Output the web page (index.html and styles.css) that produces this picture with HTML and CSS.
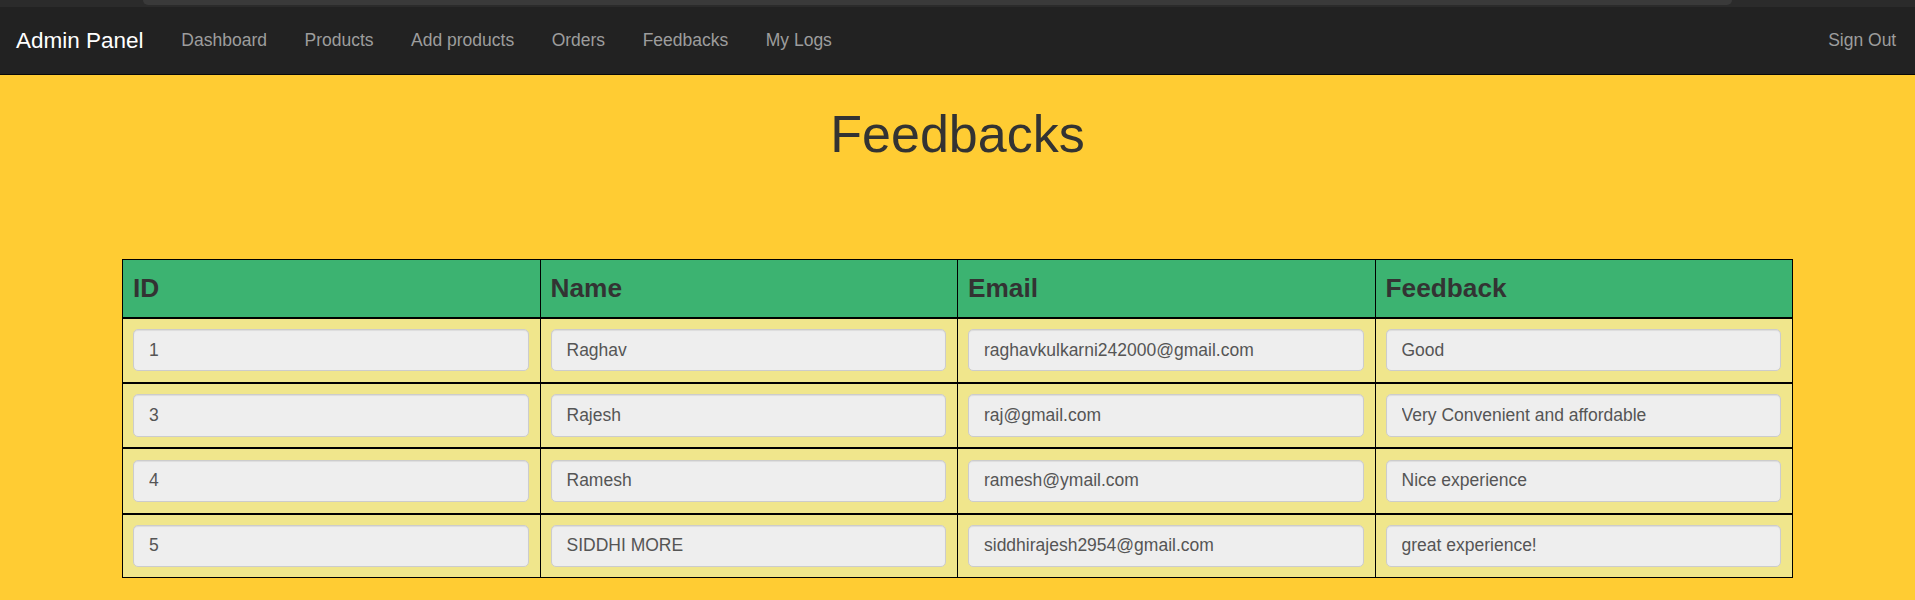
FILE: index.html
```html
<!DOCTYPE html>
<html lang="en">
<head>
<meta charset="utf-8">
<title>Feedbacks</title>
<link rel="stylesheet" href="styles.css">
</head>
<body>
<div class="topstrip"><div class="tabbar"></div></div>
<nav class="navbar">
  <a class="brand" href="#">Admin Panel</a>
  <ul class="nav">
    <li><a href="#">Dashboard</a></li>
    <li><a href="#">Products</a></li>
    <li><a href="#">Add products</a></li>
    <li><a href="#">Orders</a></li>
    <li><a href="#">Feedbacks</a></li>
    <li><a href="#">My Logs</a></li>
  </ul>
  <ul class="nav nav-right">
    <li><a href="#">Sign Out</a></li>
  </ul>
</nav>
<main class="content">
  <h1 class="title">Feedbacks</h1>
  <table class="feedback-table">
    <thead>
      <tr><th>ID</th><th>Name</th><th>Email</th><th>Feedback</th></tr>
    </thead>
    <tbody>
      <tr>
        <td><input class="field" type="text" value="1" readonly></td>
        <td><input class="field" type="text" value="Raghav" readonly></td>
        <td><input class="field" type="text" value="raghavkulkarni242000@gmail.com" readonly></td>
        <td><input class="field" type="text" value="Good" readonly></td>
      </tr>
      <tr>
        <td><input class="field" type="text" value="3" readonly></td>
        <td><input class="field" type="text" value="Rajesh" readonly></td>
        <td><input class="field" type="text" value="raj@gmail.com" readonly></td>
        <td><input class="field" type="text" value="Very Convenient and affordable" readonly></td>
      </tr>
      <tr>
        <td><input class="field" type="text" value="4" readonly></td>
        <td><input class="field" type="text" value="Ramesh" readonly></td>
        <td><input class="field" type="text" value="ramesh@ymail.com" readonly></td>
        <td><input class="field" type="text" value="Nice experience" readonly></td>
      </tr>
      <tr>
        <td><input class="field" type="text" value="5" readonly></td>
        <td><input class="field" type="text" value="SIDDHI MORE" readonly></td>
        <td><input class="field" type="text" value="siddhirajesh2954@gmail.com" readonly></td>
        <td><input class="field" type="text" value="great experience!" readonly></td>
      </tr>
    </tbody>
  </table>
</main>
</body>
</html>
```

FILE: styles.css
```css
* { box-sizing: border-box; }

html, body {
  margin: 0;
  padding: 0;
}

body {
  background: #ffcc33;
  font-family: "Liberation Sans", Arial, sans-serif;
  color: #333;
  height: 600px;
  overflow: hidden;
}

.topstrip {
  height: 7px;
  background: #2b2b2b;
  padding-left: 143px;
}

.tabbar {
  width: 1589px;
  height: 5px;
  background: #3a3a3a;
  border-radius: 0 0 6px 6px;
}

.navbar {
  height: 68px;
  background: #222;
  border-bottom: 1px solid #080808;
  display: flex;
  align-items: center;
  padding: 0 0 0 16px;
}

.brand {
  font-size: 22.5px;
  color: #fff;
  text-decoration: none;
  padding-right: 19px;
}

.nav {
  list-style: none;
  margin: 0;
  padding: 0;
  display: flex;
  align-items: center;
}

.nav a {
  display: block;
  padding: 0 18.75px;
  font-size: 17.5px;
  color: #9d9d9d;
  text-decoration: none;
}

.nav-right {
  margin-left: auto;
}

.content {
  display: flex;
  flex-direction: column;
  align-items: center;
}

.title {
  margin: 31px 0 96px;
  font-size: 52px;
  font-weight: normal;
  line-height: 57px;
  color: #333;
}

.feedback-table {
  width: 1671px;
  table-layout: fixed;
  border-collapse: collapse;
  border: 1px solid #000;
}

.feedback-table th {
  height: 58px;
  background: #3cb371;
  text-align: left;
  vertical-align: middle;
  padding: 0 10px;
  font-size: 26.25px;
  font-weight: bold;
  color: #333;
  border-left: 1px solid #000;
  border-right: 1px solid #000;
  border-bottom: 2px solid #000;
}

.feedback-table td {
  background: #f0e68c;
  padding: 10px 11px 10px 10px;
  height: 65.4px;
  border-left: 1px solid #000;
  border-right: 1px solid #000;
  border-bottom: 2px solid #000;
}

.feedback-table tbody tr:last-child td {
  border-bottom: 1px solid #000;
  height: 62px;
}

.field {
  display: block;
  width: 100%;
  height: 42.5px;
  margin: 0;
  padding: 0 15px;
  background: #eee;
  border: 1px solid #ccc;
  border-radius: 5px;
  box-shadow: inset 0 1px 1px rgba(0, 0, 0, 0.075);
  font-family: "Liberation Sans", Arial, sans-serif;
  font-size: 17.5px;
  color: #555;
  outline: none;
}
```
